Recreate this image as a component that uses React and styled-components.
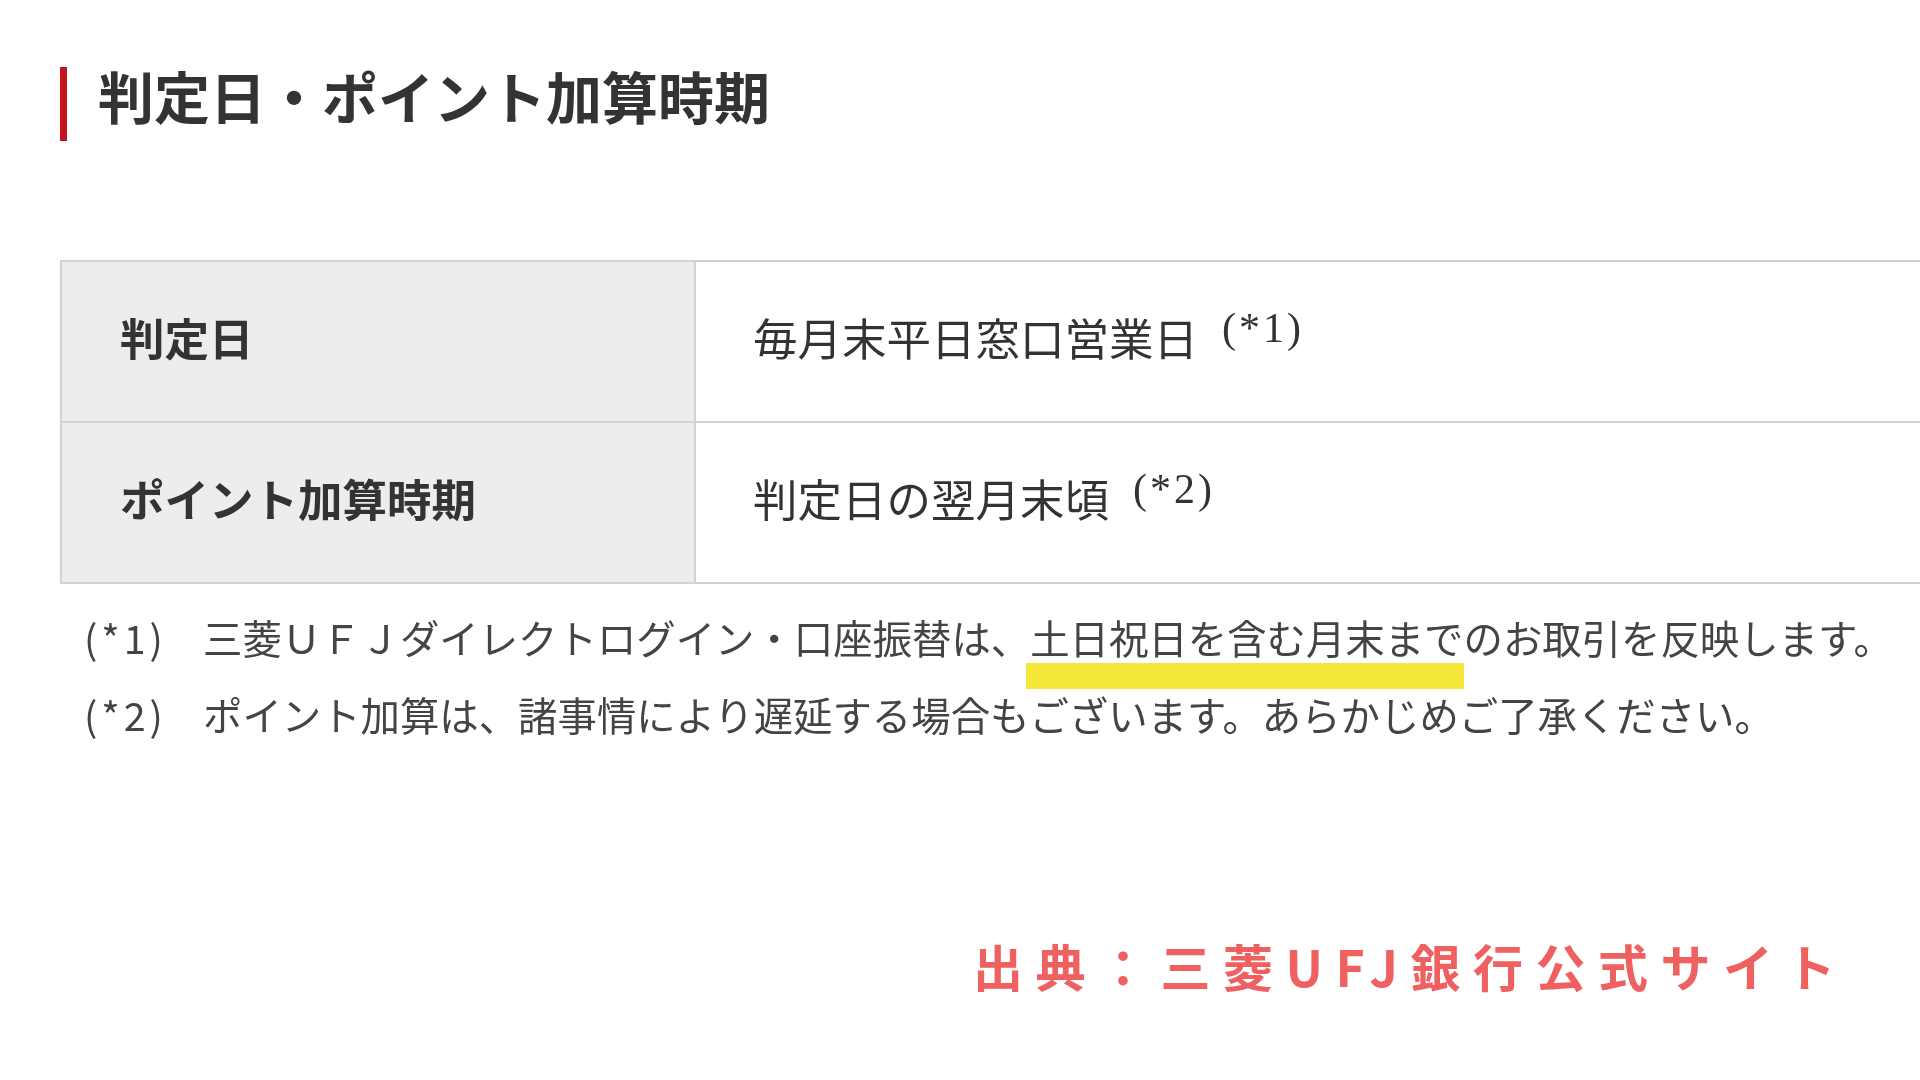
import React from "react";
import styled, { createGlobalStyle } from "styled-components";

const GlobalStyle = createGlobalStyle`
  html, body {
    margin: 0;
    padding: 0;
    background: #ffffff;
    overflow: hidden;
  }
  body {
    font-family: "Noto Sans CJK JP", "Noto Sans", sans-serif;
    color: #333333;
  }
`;

const Page = styled.div`
  box-sizing: border-box;
  width: 1920px;
  height: 1080px;
  padding: 67px 0 0 60px;
  overflow: hidden;
`;

const Heading = styled.h2`
  margin: 0;
  border-left: 7px solid #c4161c;
  padding: 0 0 18px 31px;
  font-size: 56px;
  line-height: 56px;
  font-weight: 700;
  color: #333333;
  letter-spacing: 0;
`;

const InfoTable = styled.div`
  display: grid;
  grid-template-columns: 634px 1fr;
  width: 1900px;
  margin-top: 119px;
  border-top: 2px solid #d2d2d2;
  border-left: 2px solid #d2d2d2;
`;

const Cell = styled.div`
  box-sizing: border-box;
  height: 161px;
  display: flex;
  align-items: center;
  padding-bottom: 10px;
  border-right: 2px solid #d2d2d2;
  border-bottom: 2px solid #d2d2d2;
  font-size: 44.5px;
  line-height: 60px;
  color: #333333;
  white-space: nowrap;
  background: ${(p) => (p.$head ? "#ededed" : "#ffffff")};
  font-weight: ${(p) => (p.$head ? 700 : 400)};
  padding-left: ${(p) => (p.$head ? "58px" : "57px")};
`;

const CellText = styled.span`
  display: block;
`;

const Sup = styled.span`
  font-family: "Liberation Serif", "DejaVu Serif", serif;
  font-size: 42px;
  line-height: 0;
  margin-left: 24px;
  letter-spacing: 3px;
  vertical-align: 14px;
  color: #333333;
`;

const Notes = styled.div`
  margin-top: 14px;
`;

const NoteRow = styled.div`
  display: flex;
  font-size: 39.4px;
  line-height: 77px;
  color: #444444;
  white-space: nowrap;
`;

const NoteMark = styled.span`
  box-sizing: border-box;
  flex: 0 0 143px;
  padding-left: 24px;
  letter-spacing: 4px;
`;

const Marked = styled.span`
  position: relative;
  &::after {
    content: "";
    position: absolute;
    left: -4px;
    right: 0;
    top: calc(100% - 2px);
    height: 26px;
    background: #f6e83a;
    mix-blend-mode: multiply;
  }
`;

const Source = styled.div`
  margin: 178px 0 0 913px;
  font-size: 50px;
  line-height: 70px;
  font-weight: 700;
  letter-spacing: 12.5px;
  color: #ef6060;
  white-space: nowrap;
`;

export default function App() {
  return (
    <>
      <GlobalStyle />
      <Page>
        <Heading>判定日・ポイント加算時期</Heading>
        <InfoTable>
          <Cell $head>
            <CellText>判定日</CellText>
          </Cell>
          <Cell>
            <CellText>
              毎月末平日窓口営業日<Sup>(*1)</Sup>
            </CellText>
          </Cell>
          <Cell $head>
            <CellText>ポイント加算時期</CellText>
          </Cell>
          <Cell>
            <CellText>
              判定日の翌月末頃<Sup>(*2)</Sup>
            </CellText>
          </Cell>
        </InfoTable>
        <Notes>
          <NoteRow>
            <NoteMark>(*1)</NoteMark>
            <span>
              三菱ＵＦＪダイレクトログイン・口座振替は、<Marked>土日祝日を含む月末まで</Marked>のお取引を反映します。
            </span>
          </NoteRow>
          <NoteRow>
            <NoteMark>(*2)</NoteMark>
            <span>ポイント加算は、諸事情により遅延する場合もございます。あらかじめご了承ください。</span>
          </NoteRow>
        </Notes>
        <Source>出典：三菱UFJ銀行公式サイト</Source>
      </Page>
    </>
  );
}
